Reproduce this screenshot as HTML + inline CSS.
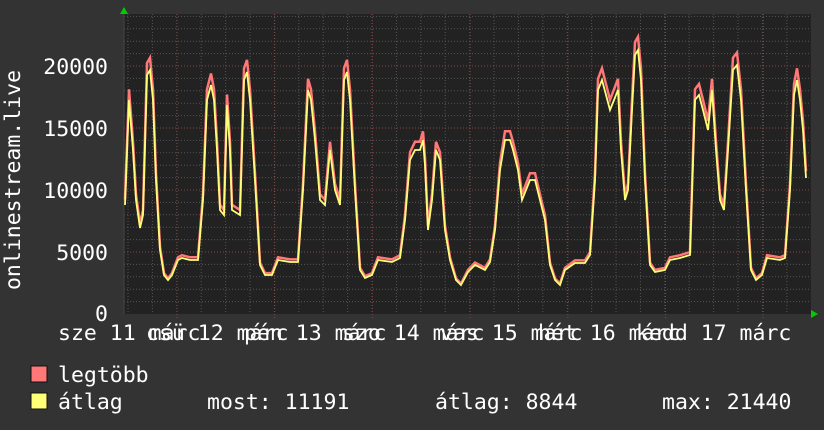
<!DOCTYPE html>
<html><head><meta charset="utf-8"><style>
html,body{margin:0;padding:0;background:#333;}
svg{display:block}
text{font-family:"DejaVu Sans Mono","Liberation Mono",monospace;font-size:21.5px;fill:#fff}
</style></head><body>
<svg id="s" width="824" height="430" xmlns="http://www.w3.org/2000/svg">
<rect width="824" height="430" fill="#333"/>
<rect x="124" y="14" width="687" height="300" fill="#222"/>
<g id="grid"></g>
<polyline id="red" fill="none" stroke="#ff7777" stroke-width="2.5" points=""/>
<polyline id="yel" fill="none" stroke="#ffff77" stroke-width="1.8" points=""/>
<polygon points="120,14 128,14 124,7" fill="#00cc00"/>
<polygon points="811,310 811,318 818,314" fill="#00cc00"/>
<g text-anchor="end">
<text x="108" y="74">20000</text>
<text x="108" y="136">15000</text>
<text x="108" y="198">10000</text>
<text x="108" y="260">5000</text>
<text x="108" y="321">0</text>
</g>
<text transform="translate(20,180) rotate(-90)" text-anchor="middle">onlinestream.live</text>
<text x="58" y="340">sze 11 márc</text>
<text x="146" y="340">csü 12 márc</text>
<text x="244" y="340">pén 13 márc</text>
<text x="342" y="340">szo 14 márc</text>
<text x="440" y="340">vas 15 márc</text>
<text x="538" y="340">hét 16 márc</text>
<text x="636" y="340">kedd 17 márc</text>
<rect x="31" y="366" width="16" height="16" fill="#ff7777" stroke="#111" stroke-width="1"/>
<rect x="31" y="393" width="16" height="16" fill="#ffff77" stroke="#111" stroke-width="1"/>
<text x="58" y="382">legtöbb</text>
<text x="58" y="409">átlag</text>
<text x="207" y="409">most: 11191</text>
<text x="435" y="409">átlag: 8844</text>
<text x="662" y="409">max: 21440</text>
</svg>
<script>
var g=document.getElementById('grid'),h="";
for(var i=1;i<=24;i++){var y=314-i*12.4;if(i%5==0)continue;h+='<line x1="124" x2="811" y1="'+y+'" y2="'+y+'" stroke="#555" stroke-dasharray="1,2"/>';}
for(var x=177-97.7*1.75;x<811;x+=24.4){if(x<125)continue;h+='<line y1="14" y2="314" x1="'+x+'" x2="'+x+'" stroke="#555" stroke-dasharray="1,2"/>';}
for(var i=1;i<=4;i++){var y=314-i*62;h+='<line x1="124" x2="811" y1="'+y+'" y2="'+y+'" stroke="#884444" stroke-dasharray="1,2"/>';}
for(var k=0;k<7;k++){var x=177+97.7*k;h+='<line y1="14" y2="318" x1="'+x+'" x2="'+x+'" stroke="#884444" stroke-dasharray="1,2"/>';}
h+='<line x1="124" x2="124" y1="14" y2="314" stroke="#444"/>';
g.innerHTML=h;
var p=[125,205,129,100,133,150,136,200,140,228,143,215,147,75,150,70,153,100,156,180,160,250,164,275,168,280,172,275,178,260,182,258,190,260,198,260,203,200,207,100,211,85,214,100,217,150,220,210,224,215,227,105,230,150,232,210,240,215,244,80,247,72,250,100,255,180,260,265,265,275,272,275,278,260,290,262,298,262,303,190,308,90,311,100,315,140,320,200,325,205,330,150,335,190,340,205,344,80,347,72,350,100,355,190,360,270,365,278,372,275,378,260,392,262,400,258,405,220,410,160,415,150,420,150,423,140,425,165,428,230,432,200,436,150,440,160,445,230,450,260,456,280,461,285,468,272,475,265,485,270,490,262,495,230,500,170,505,140,510,140,513,150,518,170,522,200,526,190,530,180,535,180,540,200,545,220,550,265,555,280,560,285,565,270,575,263,585,263,590,255,595,180,598,90,602,80,606,95,610,110,614,100,618,90,621,150,625,200,628,190,632,110,635,55,638,50,641,80,645,180,650,265,655,272,665,270,670,260,680,258,690,255,695,100,699,95,703,110,708,130,712,90,716,150,720,200,724,210,728,150,733,70,737,65,741,100,746,190,751,270,756,280,762,275,767,258,780,260,785,258,790,190,794,95,797,80,800,100,803,130,806,178];
var a="",b="";
for(var i=0;i<p.length;i+=2){a+=p[i]+","+p[i+1]+" ";b+=p[i]+","+(314-(314-p[i+1])*1.05).toFixed(1)+" ";}
document.getElementById('yel').setAttribute('points',a);
document.getElementById('red').setAttribute('points',b);
</script>
</body></html>
